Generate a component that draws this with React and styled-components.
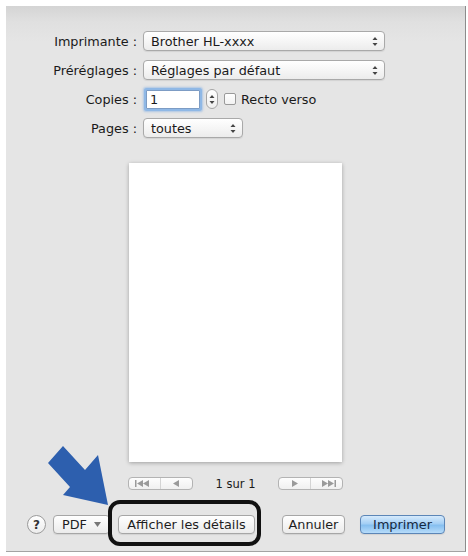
import React from 'react';
import styled, { createGlobalStyle } from 'styled-components';

const GlobalStyle = createGlobalStyle`
  body {
    margin: 0;
    background: #ffffff;
    font-family: "DejaVu Sans", "Lucida Grande", sans-serif;
  }
`;

const Panel = styled.div`
  position: relative;
  box-sizing: border-box;
  width: 460px;
  height: 546px;
  margin: 6px 0 0 6px;
  display: flex;
  flex-direction: column;
  background: linear-gradient(#d4d4d4 0, #e0e0e0 16px, #e5e5e5 36px, #e5e5e5 100%);
  border-right: 1px solid #8c8c8c;
  border-bottom: 1px solid #a3a3a3;
  color: #1a1a1a;
  font-size: 12.8px;
`;

const Form = styled.div`
  display: grid;
  grid-template-columns: 131px auto;
  grid-auto-rows: 20px;
  column-gap: 6px;
  row-gap: 9px;
  margin-top: 25px;
  align-items: center;
`;

const Label = styled.div`
  text-align: right;
  white-space: nowrap;
`;

const Popup = styled.div`
  box-sizing: border-box;
  width: ${p => p.$w}px;
  height: 20px;
  display: flex;
  align-items: center;
  justify-content: space-between;
  padding: 0 6px 0 7px;
  background: linear-gradient(#ffffff, #f4f4f4 60%, #ececec);
  border: 1px solid #a9a9a9;
  border-radius: 4px;
  box-shadow: 0 1px 1px rgba(0, 0, 0, 0.08);
`;

const Row = styled.div`
  display: flex;
  align-items: center;
`;

const Field = styled.div`
  box-sizing: border-box;
  width: 54px;
  height: 19px;
  margin-left: 3px;
  padding: 0 3px;
  display: flex;
  align-items: center;
  background: #fff;
  border: 1px solid #7d9cc4;
  box-shadow: 0 0 0 2px #8fb8e6, 0 0 2px 3px rgba(120, 170, 230, 0.5);
  border-radius: 1px;
`;

const Stepper = styled.div`
  box-sizing: border-box;
  width: 12px;
  height: 20px;
  margin-left: 6px;
  display: flex;
  align-items: center;
  justify-content: center;
  background: linear-gradient(#fff, #efefef);
  border: 1px solid #a5a5a5;
  border-radius: 6px;
`;

const Check = styled.div`
  box-sizing: border-box;
  width: 12px;
  height: 12px;
  margin: 0 5px 0 6px;
  background: linear-gradient(#fff, #f2f2f2);
  border: 1px solid #9a9a9a;
  border-radius: 2px;
`;

const Preview = styled.div`
  align-self: center;
  width: 213px;
  height: 299px;
  margin-top: 25px;
  background: #ffffff;
  box-shadow: 0 1px 4px rgba(0, 0, 0, 0.3);
`;

const Nav = styled.div`
  display: flex;
  justify-content: center;
  align-items: center;
  gap: 23px;
  margin-top: 15px;
  height: 13px;
  font-size: 11.5px;
`;

const NavGroup = styled.div`
  box-sizing: border-box;
  width: 65px;
  height: 13px;
  display: flex;
  background: linear-gradient(#fdfdfd, #f0f0f0);
  border: 1px solid #b3b3b3;
  border-radius: 4px;
`;

const NavHalf = styled.div`
  flex: 1;
  display: flex;
  align-items: center;
  justify-content: center;
  & + & {
    border-left: 1px solid #d4d4d4;
  }
`;

const Bottom = styled.div`
  display: flex;
  align-items: center;
  margin-top: 25px;
  padding-left: 21px;
`;

const Help = styled.div`
  box-sizing: border-box;
  width: 19px;
  height: 19px;
  display: flex;
  align-items: center;
  justify-content: center;
  border-radius: 50%;
  background: linear-gradient(#ffffff, #ececec);
  border: 1px solid #9b9b9b;
  font-weight: bold;
  font-size: 12px;
  color: #333;
`;

const Button = styled.div`
  box-sizing: border-box;
  width: ${p => p.$w}px;
  height: 19px;
  margin-left: ${p => p.$gap}px;
  display: flex;
  align-items: center;
  justify-content: center;
  gap: 7px;
  border-radius: 4px;
  white-space: nowrap;
  background: ${p =>
    p.$primary
      ? 'linear-gradient(#d6eafc, #a4cff5 45%, #86bff0 55%, #b7dcfa)'
      : 'linear-gradient(#ffffff, #f3f3f3 60%, #ebebeb)'};
  border: 1px solid ${p => (p.$primary ? '#5c86b7' : '#a6a6a6')};
  box-shadow: 0 1px 1px rgba(0, 0, 0, 0.08);
  color: ${p => (p.$primary ? '#142740' : '#1e1e1e')};
`;

const Highlight = styled.div`
  position: relative;
  margin-left: ${p => p.$gap}px;
  &::before {
    content: '';
    position: absolute;
    left: -10px;
    right: -6px;
    top: -15px;
    bottom: -12px;
    border: 4px solid #111;
    border-radius: 12px;
    pointer-events: none;
  }
`;

const Arrow = styled.svg`
  position: absolute;
  left: 40px;
  top: 440px;
  width: 66px;
  height: 62px;
`;

const UpDown = () => (
  <svg width="6" height="11" viewBox="0 0 6 11">
    <path d="M3 1 L5.5 4 L0.5 4 Z" fill="#444" />
    <path d="M3 10 L5.5 7 L0.5 7 Z" fill="#444" />
  </svg>
);

const NavIcon = ({ kind }) => {
  const c = '#9a9a9a';
  if (kind === 'first')
    return (
      <svg width="18" height="7" viewBox="0 0 18 7">
        <rect x="0" y="0" width="1.5" height="7" fill={c} />
        <path d="M2 3.5 L8 0 L8 7 Z M8 3.5 L14 0 L14 7 Z" fill={c} />
      </svg>
    );
  if (kind === 'prev')
    return (
      <svg width="8" height="7" viewBox="0 0 8 7">
        <path d="M1 3.5 L7 0 L7 7 Z" fill={c} />
      </svg>
    );
  if (kind === 'next')
    return (
      <svg width="8" height="7" viewBox="0 0 8 7">
        <path d="M7 3.5 L1 0 L1 7 Z" fill={c} />
      </svg>
    );
  return (
    <svg width="18" height="7" viewBox="0 0 18 7">
      <path d="M10 3.5 L4 0 L4 7 Z M16 3.5 L10 0 L10 7 Z" fill={c} />
      <rect x="16.5" y="0" width="1.5" height="7" fill={c} />
    </svg>
  );
};

export default function App() {
  return (
    <>
      <GlobalStyle />
      <Panel>
        <Form>
          <Label>Imprimante :</Label>
          <Popup $w={242}>
            <span>Brother HL-xxxx</span>
            <UpDown />
          </Popup>

          <Label>Préréglages :</Label>
          <Popup $w={242}>
            <span>Réglages par défaut</span>
            <UpDown />
          </Popup>

          <Label>Copies :</Label>
          <Row>
            <Field>1</Field>
            <Stepper>
              <UpDown />
            </Stepper>
            <Check />
            <span>Recto verso</span>
          </Row>

          <Label>Pages :</Label>
          <Popup $w={100}>
            <span>toutes</span>
            <UpDown />
          </Popup>
        </Form>

        <Preview />

        <Nav>
          <NavGroup>
            <NavHalf><NavIcon kind="first" /></NavHalf>
            <NavHalf><NavIcon kind="prev" /></NavHalf>
          </NavGroup>
          <span>1 sur 1</span>
          <NavGroup>
            <NavHalf><NavIcon kind="next" /></NavHalf>
            <NavHalf><NavIcon kind="last" /></NavHalf>
          </NavGroup>
        </Nav>

        <Bottom>
          <Help>?</Help>
          <Button $w={57} $gap={7}>
            PDF
            <svg width="7" height="5" viewBox="0 0 7 5">
              <path d="M0 0 L7 0 L3.5 5 Z" fill="#777" />
            </svg>
          </Button>
          <Highlight $gap={8}>
            <Button $w={137} $gap={0}>Afficher les détails</Button>
          </Highlight>
          <Button $w={63} $gap={27}>Annuler</Button>
          <Button $w={85} $gap={15} $primary>Imprimer</Button>
        </Bottom>

        <Arrow viewBox="0 0 66 62">
          <path
            d="M17 0 L39 24 L52 9 L62 59 L17 49 L24 41 L2 17 Z"
            fill="#2d5fae"
          />
        </Arrow>
      </Panel>
    </>
  );
}
